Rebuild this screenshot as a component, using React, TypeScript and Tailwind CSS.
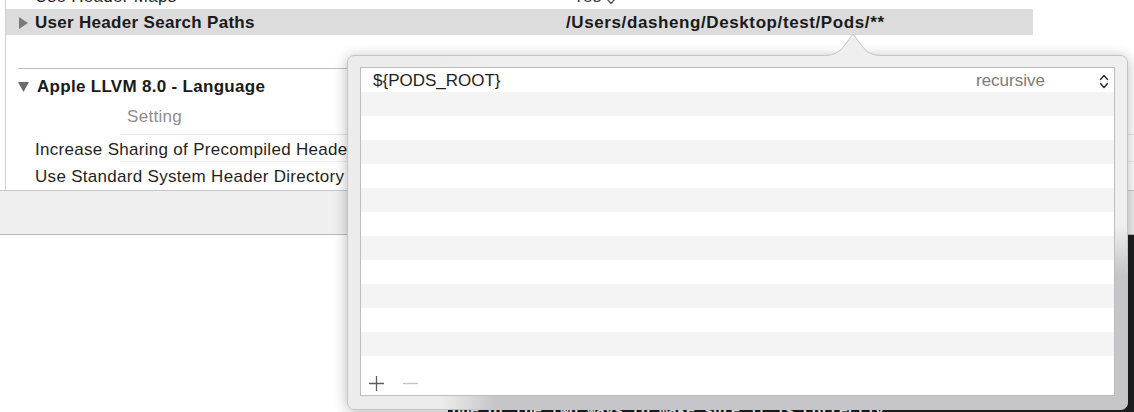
import React from "react";

function Disclosure({ open }: { open?: boolean }) {
  return open ? (
    <svg width="11" height="10" viewBox="0 0 11 10" className="shrink-0">
      <polygon points="0,0 11,0 5.5,10" fill="#6b6b6b" />
    </svg>
  ) : (
    <svg width="9" height="12" viewBox="0 0 9 12" className="shrink-0">
      <polygon points="0,0 9,6 0,12" fill="#7a7a7a" />
    </svg>
  );
}

function UpDown({ color = "#2a2a2a" }: { color?: string }) {
  return (
    <svg width="10" height="15" viewBox="0 0 10 15" className="shrink-0">
      <path
        d="M1.5 5.5 L5 1.5 L8.5 5.5 M1.5 9.5 L5 13.5 L8.5 9.5"
        fill="none"
        stroke={color}
        strokeWidth="1.4"
        strokeLinecap="round"
        strokeLinejoin="round"
      />
    </svg>
  );
}

function PathsPopover() {
  const rows = Array.from({ length: 12 }, (_, i) => i);

  return (
    <>
      <div className="absolute left-[347px] top-[55px] flex h-[355px] w-[781px] flex-col rounded-[7px] border border-[#c4c4c4] bg-[linear-gradient(90deg,#ececec_0%,#ececec_12%,transparent_19%),linear-gradient(180deg,#efefef_48%,#c6c6ca_62%)] pb-[13px] pl-[12px] pr-[12px] pt-[11px] shadow-[0_2px_14px_rgba(0,0,0,0.28)]">
        <div className="flex flex-1 flex-col border border-[#bcbcbc] bg-white text-[17px] tracking-normal">
          {rows.map((i) => (
            <div
              key={i}
              className={
                i % 2 === 1
                  ? "flex h-[24px] items-center bg-[#f4f4f4]"
                  : "flex h-[24px] items-center bg-white pt-[2px]"
              }
            >
              {i === 0 && (
                <>
                  <span className="flex-1 pl-[12px] text-[#1e1e1e]">
                    {"${PODS_ROOT}"}
                  </span>
                  <div className="flex w-[138px] items-center pr-[5px]">
                    <span className="text-[#7b7b7b]">recursive</span>
                    <span className="ml-auto">
                      <UpDown />
                    </span>
                  </div>
                </>
              )}
            </div>
          ))}
          <div className="flex flex-1 items-center gap-[17px] pl-[7px] pt-[15px]">
            <svg width="17" height="17" viewBox="0 0 17 17">
              <path
                d="M8.5 1 V16 M1 8.5 H16"
                stroke="#5c5c5c"
                strokeWidth="1.3"
              />
            </svg>
            <svg width="17" height="17" viewBox="0 0 17 17">
              <path d="M1 8.5 H16" stroke="#c2c2c2" strokeWidth="1.3" />
            </svg>
          </div>
        </div>
      </div>
      <svg
        width="60"
        height="23"
        viewBox="0 0 60 23"
        className="absolute left-[823px] top-[33px]"
      >
        <path
          d="M0 22.5 C10 22.5 16 20 21 13 L30 1 L39 13 C44 20 50 22.5 60 22.5 V23 H0 Z"
          fill="#efefef"
        />
        <path
          d="M0 22.5 C10 22.5 16 20 21 13 L30 1 L39 13 C44 20 50 22.5 60 22.5"
          fill="none"
          stroke="#c4c4c4"
          strokeWidth="1"
        />
      </svg>
    </>
  );
}

export default function App() {
  return (
    <div className="relative h-[412px] w-[1134px] overflow-hidden bg-white font-['Liberation_Sans',Arial,sans-serif] text-[17px] tracking-[0.3px] text-[#1f1f1f]">
      <div className="ml-[5px] h-[190px] overflow-hidden border-l border-[#d0d0d0]">
        <div className="-mt-[17px]">
          <div className="flex h-[26px] items-center pt-[2px]">
            <span className="w-[560px] pl-[29px]">Use Header Maps</span>
            <span className="flex items-center gap-[4px] pl-[7px] text-[#333]">
              Yes
              <UpDown color="#555" />
            </span>
          </div>

          <div className="flex h-[26px] w-[1027px] items-center bg-[#dcdcdc] pt-[2px] font-bold text-[#1a1a1a]">
            <div className="flex w-[560px] items-center gap-[7px] pl-[13px]">
              <Disclosure />
              <span>User Header Search Paths</span>
            </div>
            <span className="tracking-[0.6px]">
              /Users/dasheng/Desktop/test/Pods/**
            </span>
          </div>

          <div className="h-[33px]" />
          <div className="ml-[12px] w-[1020px] border-t border-[#bdbdbd]" />

          <div className="flex h-[34px] items-center gap-[8px] pl-[12px] pt-[2px] font-bold text-[#1a1a1a]">
            <Disclosure open />
            <span>Apple LLVM 8.0 - Language</span>
          </div>

          <div className="ml-[114px] flex h-[32px] items-center border-b border-[#e6e6e6] pb-[3px] pl-[7px] text-[#8e8e8e]">
            Setting
          </div>

          <div className="ml-[114px] flex h-[27px] items-center border-b border-[#eeeeee] pt-[3px]">
            <span className="-ml-[85px] whitespace-nowrap">
              Increase Sharing of Precompiled Headers
            </span>
          </div>

          <div className="flex h-[28px] items-center pl-[29px] pt-[2px]">
            <span className="whitespace-nowrap">
              Use Standard System Header Directory Only
            </span>
          </div>
        </div>
      </div>

      <div className="h-[45px] border-y border-b-[#b9b9b9] border-t-[#c8c8c8] bg-[#efefef]" />

      <div className="flex h-[177px]">
        <div className="w-[448px] bg-white" />
        <div className="flex flex-1 flex-col justify-end bg-[#1e1f23]">
          <div className="-mb-[9px] whitespace-nowrap pl-[4px] font-['Liberation_Mono',monospace] text-[15px] font-bold leading-[18px] tracking-normal text-white">
            one of the two ways to make sure it is correctly:
          </div>
        </div>
      </div>

      <PathsPopover />
    </div>
  );
}
